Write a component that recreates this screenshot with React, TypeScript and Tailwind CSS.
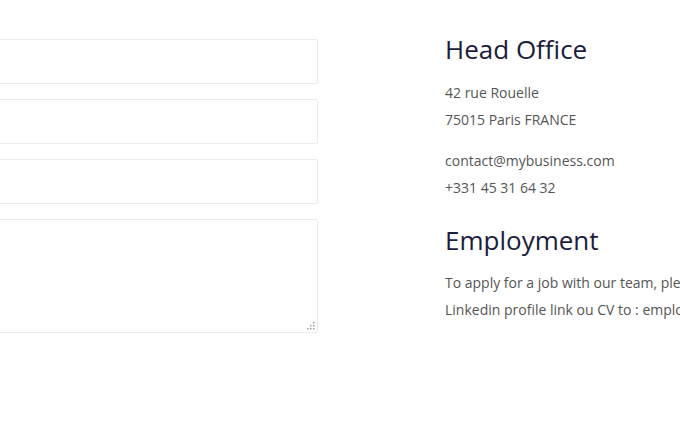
const font = { fontFamily: '"Open Sans", "Noto Sans", sans-serif' };

const Field = () => (
  <input
    type="text"
    className="block w-full h-[45px] border border-[#ebebeb] rounded-[2px] bg-white px-3 outline-none"
  />
);

// dotted resize grip like the old webkit one
const Grip = () => (
  <svg className="absolute right-[3px] bottom-[3px]" width="8" height="8" viewBox="0 0 8 8">
    <g fill="#9a9a9a">
      <rect x="6" y="0" width="1.5" height="1.5" />
      <rect x="3" y="3" width="1.5" height="1.5" />
      <rect x="6" y="3" width="1.5" height="1.5" />
      <rect x="0" y="6" width="1.5" height="1.5" />
      <rect x="3" y="6" width="1.5" height="1.5" />
      <rect x="6" y="6" width="1.5" height="1.5" />
    </g>
  </svg>
);

const App = () => {
  return (
    <div className="w-[680px] h-[425px] bg-white overflow-hidden" style={font}>
      <div className="flex pt-[39px]">
        <form className="w-[338px] -ml-[20px] shrink-0 flex flex-col gap-[15px]">
          <Field />
          <Field />
          <Field />
          <div className="relative">
            <textarea className="block w-full h-[114px] border border-[#ebebeb] rounded-[2px] bg-white px-3 outline-none resize-none" />
            <Grip />
          </div>
        </form>

        <div className="ml-[127px] -mt-[3px] whitespace-nowrap">
          <h2 className="text-[26px] leading-[24px] text-[#1c1c3c] font-normal pt-[1px]">Head Office</h2>
          <p className="mt-[18px] text-[14px] leading-[27px] text-[#555]">
            42 rue Rouelle
            <br />
            75015 Paris FRANCE
          </p>
          <p className="mt-[14px] text-[14px] leading-[27px] text-[#555]">
            contact@mybusiness.com
            <br />
            +331 45 31 64 32
          </p>
          <h2 className="mt-[27px] text-[26px] leading-[24px] text-[#1c1c3c] font-normal">Employment</h2>
          <p className="mt-[17px] text-[14px] leading-[27px] text-[#555]">
            To apply for a job with our team, please send your
            <br />
            Linkedin profile link ou CV to : employment@mybusiness.com
          </p>
        </div>
      </div>
    </div>
  );
};

export default App;
